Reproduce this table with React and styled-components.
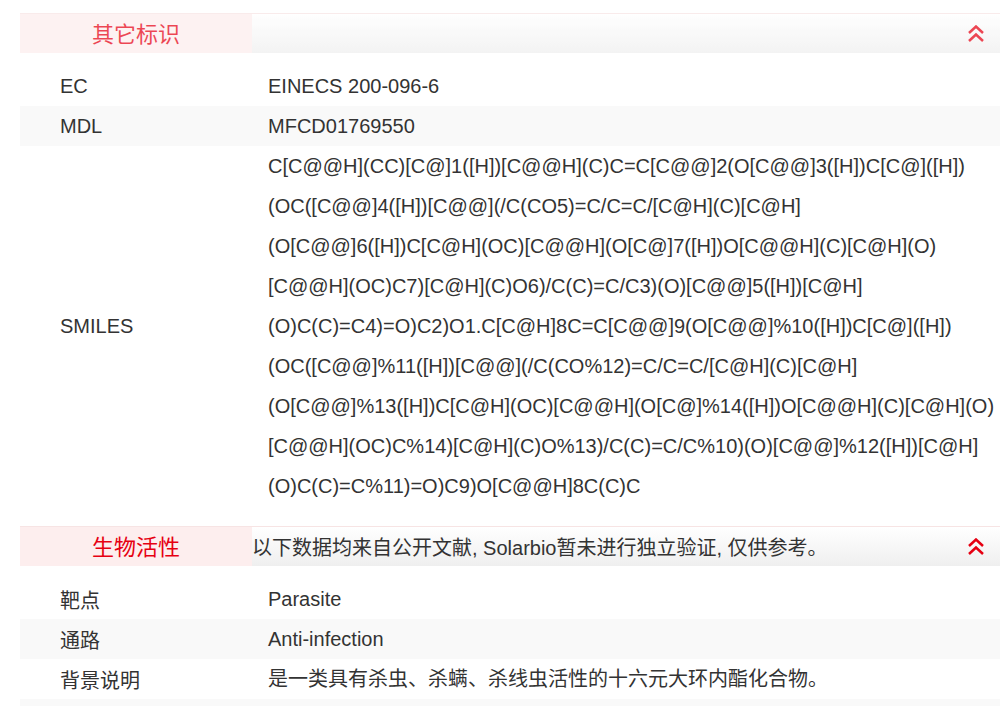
import React from "react";
import styled, { createGlobalStyle } from "styled-components";

const GlobalStyle = createGlobalStyle`
  html, body {
    margin: 0;
    padding: 0;
    background: #fff;
    overflow: hidden;
  }
  body {
    font-family: "Liberation Sans", Arial, "Noto Sans CJK SC", sans-serif;
    color: #333;
  }
`;

const Page = styled.div`
  padding: 13px 0 0 20px;
  width: 980px;
`;

const Section = styled.div`
  margin-bottom: 20px;
`;

const Header = styled.div`
  display: flex;
  align-items: stretch;
  height: 39px;
  border-top: 1px solid #f7e4e4;
  background: linear-gradient(to bottom, #ffffff, #efefef);
  opacity: ${p => (p.$faded ? 0.72 : 1)};
`;

const Tab = styled.div`
  width: 232px;
  flex: none;
  display: flex;
  align-items: center;
  justify-content: center;
  padding-bottom: 3px;
  box-sizing: border-box;
  background: #fdeeee;
  color: #e60012;
  font-size: 22px;
  font-family: "Noto Sans CJK SC", sans-serif;
`;

const Note = styled.div`
  flex: 1;
  display: flex;
  align-items: center;
  font-size: 20px;
  color: #333;
  white-space: nowrap;
`;

const Toggle = styled.div`
  width: 48px;
  flex: none;
  margin-left: auto;
  display: flex;
  align-items: center;
  justify-content: center;
`;

const Table = styled.div`
  padding-top: 13px;
`;

const Row = styled.div`
  display: flex;
  align-items: center;
  min-height: 40px;
  background: ${p => (p.$shade ? "#f9f9f9" : "#fff")};
  font-size: 20px;
`;

const Label = styled.div`
  width: 208px;
  flex: none;
  padding-left: 40px;
`;

const Value = styled.div`
  flex: 1;
  line-height: 40px;
  white-space: nowrap;
`;

const Line = styled.div`
  line-height: 40px;
`;

const Chevrons = () => (
  <svg width="18" height="18" viewBox="0 0 18 18" fill="none">
    <polyline points="2,8 9,1.5 16,8" stroke="#e60012" strokeWidth="2.5" />
    <polyline points="2,16 9,9.5 16,16" stroke="#e60012" strokeWidth="2.5" />
  </svg>
);

const smiles = [
  "C[C@@H](CC)[C@]1([H])[C@@H](C)C=C[C@@]2(O[C@@]3([H])C[C@]([H])",
  "(OC([C@@]4([H])[C@@](/C(CO5)=C/C=C/[C@H](C)[C@H]",
  "(O[C@@]6([H])C[C@H](OC)[C@@H](O[C@]7([H])O[C@@H](C)[C@H](O)",
  "[C@@H](OC)C7)[C@H](C)O6)/C(C)=C/C3)(O)[C@@]5([H])[C@H]",
  "(O)C(C)=C4)=O)C2)O1.C[C@H]8C=C[C@@]9(O[C@@]%10([H])C[C@]([H])",
  "(OC([C@@]%11([H])[C@@](/C(CO%12)=C/C=C/[C@H](C)[C@H]",
  "(O[C@@]%13([H])C[C@H](OC)[C@@H](O[C@]%14([H])O[C@@H](C)[C@H](O)",
  "[C@@H](OC)C%14)[C@H](C)O%13)/C(C)=C/C%10)(O)[C@@]%12([H])[C@H]",
  "(O)C(C)=C%11)=O)C9)O[C@@H]8C(C)C",
];

const bio = [
  ["靶点", "Parasite"],
  ["通路", "Anti-infection"],
  ["背景说明", "是一类具有杀虫、杀螨、杀线虫活性的十六元大环内酯化合物。"],
  ["", ""],
];

export default function App() {
  return (
    <Page>
      <GlobalStyle />
      <Section>
        <Header $faded>
          <Tab>其它标识</Tab>
          <Toggle>
            <Chevrons />
          </Toggle>
        </Header>
        <Table>
          <Row>
            <Label>EC</Label>
            <Value>EINECS 200-096-6</Value>
          </Row>
          <Row $shade>
            <Label>MDL</Label>
            <Value>MFCD01769550</Value>
          </Row>
          <Row>
            <Label>SMILES</Label>
            <Value>
              {smiles.map(s => (
                <Line key={s}>{s}</Line>
              ))}
            </Value>
          </Row>
        </Table>
      </Section>
      <Section>
        <Header>
          <Tab>生物活性</Tab>
          <Note>以下数据均来自公开文献, Solarbio暂未进行独立验证, 仅供参考。</Note>
          <Toggle>
            <Chevrons />
          </Toggle>
        </Header>
        <Table>
          {bio.map(([k, v], i) => (
            <Row key={i} $shade={i % 2 === 1}>
              <Label>{k}</Label>
              <Value>{v}</Value>
            </Row>
          ))}
        </Table>
      </Section>
    </Page>
  );
}
